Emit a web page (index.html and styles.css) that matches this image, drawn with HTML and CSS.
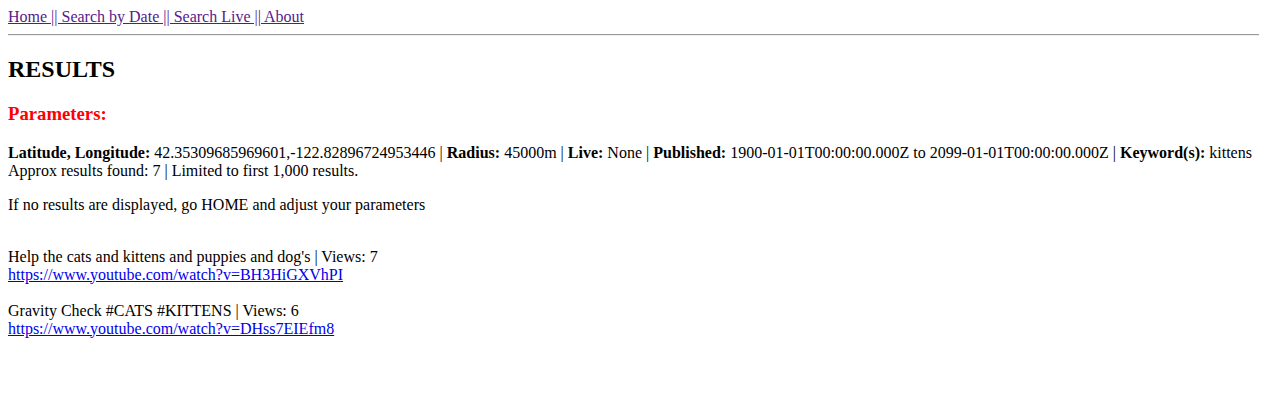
FILE: index.html
```html
<!DOCTYPE html>
<html>
<head>
<meta charset="utf-8">
<title>Results</title>
<link rel="stylesheet" href="styles.css">
</head>
<body>
<div class="nav"><a class="visited" href="#">Home |</a><a class="visited" href="#">| Search by Date |</a><a class="visited" href="#">| Search Live |</a><a class="visited" href="#">| About</a></div>
<div class="rule"></div>
<h2 class="title">RESULTS</h2>
<h3 class="params-title">Parameters:</h3>
<p class="params"><b>Latitude, Longitude:</b> 42.35309685969601,-122.82896724953446 | <b>Radius:</b> 45000m | <b>Live:</b> None | <b>Published:</b> 1900-01-01T00:00:00.000Z to 2099-01-01T00:00:00.000Z | <b>Keyword(s):</b> kittens<br>Approx results found: 7 | Limited to first 1,000 results.</p>
<p class="note">If no results are displayed, go HOME and adjust your parameters</p>
<br>
<div class="results">Help the cats and kittens and puppies and dog's | Views: 7<br><a class="link" href="#">https://www.youtube.com/watch?v=BH3HiGXVhPI</a><br><br>Gravity Check #CATS #KITTENS | Views: 6<br><a class="link" href="#">https://www.youtube.com/watch?v=DHss7EIEfm8</a></div>
</body>
</html>
```
FILE: styles.css
```css
html {
  overflow-x: hidden;
}
body {
  margin: 8px;
  font-family: "Liberation Serif", "Times New Roman", serif;
  font-size: 16px;
  color: #000;
  background: #fff;
}
.nav a {
  color: #551a8b;
  text-decoration: underline;
}
.rule {
  margin: 8px -8px 8px 0;
  height: 0;
  border-top: 1px solid #9a9a9a;
  border-bottom: 1px solid #eeeeee;
}
.title {
  font-size: 24px;
  font-weight: bold;
  margin: 19.92px 0;
}
.params-title {
  font-size: 18.72px;
  font-weight: bold;
  color: #ff0000;
  margin: 18.72px 0;
}
.params,
.note {
  margin: 16px 0;
}
.link {
  color: #0000ee;
  text-decoration: underline;
}
```
